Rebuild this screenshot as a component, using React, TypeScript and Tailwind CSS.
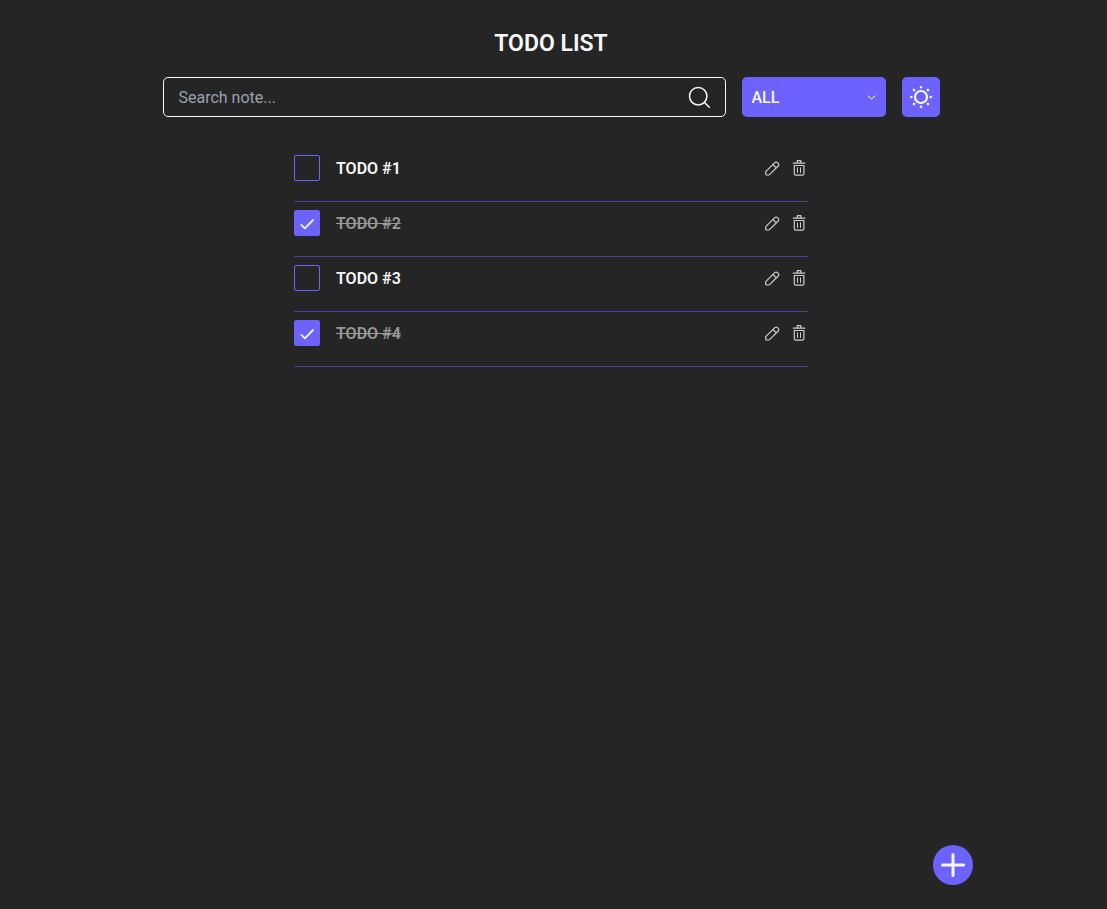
import { useState } from "react";

type Todo = { id: number; title: string; done: boolean };

const initialTodos: Todo[] = [
  { id: 1, title: "TODO #1", done: false },
  { id: 2, title: "TODO #2", done: true },
  { id: 3, title: "TODO #3", done: false },
  { id: 4, title: "TODO #4", done: true },
];

function SearchIcon() {
  return (
    <svg className="size-6" viewBox="0 0 24 24" fill="none" stroke="#f7f7f7" strokeWidth="1.5" strokeLinecap="round" aria-hidden="true">
      <circle cx="11.2" cy="11.2" r="8.7" />
      <path d="M17.5 17.5 22.3 22.3" />
    </svg>
  );
}

function SunIcon() {
  return (
    <svg className="size-6" viewBox="0 0 24 24" fill="none" stroke="#f7f7f7" aria-hidden="true">
      <circle cx="12" cy="12" r="6" strokeWidth="2.2" />
      <path
        strokeWidth="2.6"
        strokeLinecap="round"
        d="M12 2.2v.1M12 21.7v.1M2.2 12h.1M21.7 12h.1M5 5l.1.1M18.9 18.9l.1.1M5 19l.1-.1M18.9 5.1l.1-.1"
      />
    </svg>
  );
}

function PencilIcon() {
  return (
    <svg className="size-4" viewBox="0 0 16 16" fill="none" stroke="#cdcdcd" strokeWidth="1.2" strokeLinecap="round" strokeLinejoin="round" aria-hidden="true">
      <path d="M2 11.4 10.8 2.6a1.9 1.9 0 0 1 2.7 0l.7.7a1.9 1.9 0 0 1 0 2.7l-8.7 8.7a1 1 0 0 1-.7.3H2.7a1 1 0 0 1-1-1v-1.9a1 1 0 0 1 .3-.7zM8.9 4.5l3.4 3.4" />
    </svg>
  );
}

function TrashIcon() {
  return (
    <svg className="size-[18px]" viewBox="0 0 18 18" fill="none" stroke="#cdcdcd" strokeLinecap="round" strokeLinejoin="round" aria-hidden="true">
      <path strokeWidth="1.2" d="M3.3 4.2h11.4M7.3 3.6V1.7h3.6v1.9M4.3 6.5h9.6v8.1a1.6 1.6 0 0 1-1.6 1.6H5.9a1.6 1.6 0 0 1-1.6-1.6z" />
      <path d="M7.5 8.8v4.7M10.5 8.8v4.7" />
    </svg>
  );
}

export default function App() {
  const [todos, setTodos] = useState(initialTodos);
  const [query, setQuery] = useState("");
  const [filter, setFilter] = useState("all");

  const toggle = (id: number) =>
    setTodos((list) => list.map((t) => (t.id === id ? { ...t, done: !t.done } : t)));
  const remove = (id: number) => setTodos((list) => list.filter((t) => t.id !== id));

  const visible = todos.filter(
    (t) =>
      t.title.toLowerCase().includes(query.toLowerCase()) &&
      (filter === "all" || (filter === "complete") === t.done),
  );

  return (
    <div className="min-h-screen bg-[#252525] pt-[26px] pr-[5px] font-[Roboto,sans-serif] text-[#f7f7f7]">
      <header className="mx-auto max-w-[777px]">
        <h1 className="text-center text-[23px] leading-9 font-semibold">TODO LIST</h1>
        <div className="mt-[15px] flex gap-4">
          <div className="flex h-10 min-w-0 flex-1 items-center rounded-[5px] border border-[#f7f7f7] pr-[14px] pl-[15px]">
            <input
              type="text"
              aria-label="Search note"
              placeholder="Search note..."
              value={query}
              onChange={(e) => setQuery(e.target.value)}
              className="min-w-0 flex-1 bg-transparent pt-0.5 text-base outline-none placeholder:text-[#99a1af]"
            />
            <button type="button" aria-label="Search">
              <SearchIcon />
            </button>
          </div>
          <div className="relative h-10 w-36">
            <select
              aria-label="Filter"
              value={filter}
              onChange={(e) => setFilter(e.target.value)}
              className="size-full appearance-none rounded-[5px] bg-[#6c63ff] px-[10px] pt-0.5 text-base font-medium outline-none"
            >
              <option value="all">ALL</option>
              <option value="complete">Complete</option>
              <option value="incomplete">Incomplete</option>
            </select>
            <svg className="pointer-events-none absolute top-[17px] right-[10px] h-[7px] w-[9px]" viewBox="0 0 9 7" fill="none" stroke="#f7f7f7" strokeLinecap="round" aria-hidden="true">
              <path d="m1 2 3.5 3L8 2" />
            </svg>
          </div>
          <button type="button" aria-label="Switch theme" className="flex h-10 w-[38px] items-center justify-center rounded-[5px] bg-[#6c63ff]">
            <SunIcon />
          </button>
        </div>
      </header>

      <main className="mx-auto mt-[30px] max-w-[514px]">
        <ul>
          {visible.map((todo) => (
            <li key={todo.id} className="flex items-start border-b border-[#534cc2]/80 pt-2 pb-5">
              <label className="flex flex-1 items-center gap-4">
                <input type="checkbox" checked={todo.done} onChange={() => toggle(todo.id)} className="peer sr-only" />
                <span className="flex size-[26px] items-center justify-center rounded-[2px] border border-[#6c63ff] text-transparent peer-checked:bg-[#6c63ff] peer-checked:text-[#f7f7f7]">
                  <svg className="size-4" viewBox="0 0 16 16" fill="none" stroke="currentColor" strokeWidth="1.8" aria-hidden="true">
                    <path d="m1.8 9.3 4.1 4L14.5 4.5" />
                  </svg>
                </span>
                <span className="pt-0.5 text-base leading-6 font-semibold peer-checked:text-[#999999] peer-checked:line-through">
                  {todo.title}
                </span>
              </label>
              <div className="flex h-[26px] items-center gap-[10px]">
                <button type="button" aria-label={`Edit ${todo.title}`}>
                  <PencilIcon />
                </button>
                <button type="button" aria-label={`Delete ${todo.title}`} onClick={() => remove(todo.id)}>
                  <TrashIcon />
                </button>
              </div>
            </li>
          ))}
        </ul>
      </main>

      <button type="button" aria-label="Add note" className="fixed right-[134px] bottom-6 flex size-10 items-center justify-center rounded-full bg-[#6c63ff]">
        <svg className="size-6" viewBox="0 0 24 24" fill="none" stroke="#f7f7f7" strokeWidth="3" strokeLinecap="round" aria-hidden="true">
          <path d="M12 1.5v21M1.5 12h21" />
        </svg>
      </button>
    </div>
  );
}
